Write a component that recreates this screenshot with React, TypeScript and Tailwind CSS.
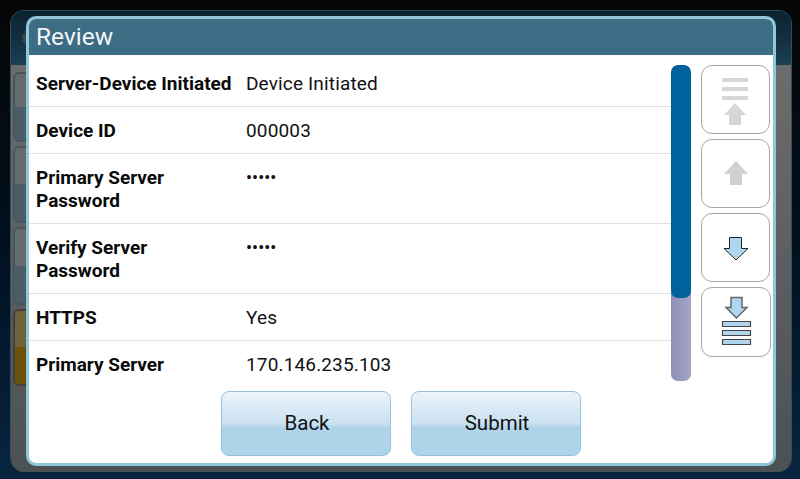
const rows = [
  { label: 'Server-Device Initiated', value: 'Device Initiated', h: 'h-[52px]', pt: 'pt-[17px]', valueSize: 'text-[19px] tracking-[0.15px]', labelWidth: 'whitespace-nowrap' },
  { label: 'Device ID', value: '000003', h: 'h-[47px]', pt: 'pt-[12px]', valueSize: 'text-[19px] tracking-[0.15px]', labelWidth: 'whitespace-nowrap' },
  { label: 'Primary Server Password', value: '•••••', h: 'h-[70px]', pt: 'pt-[12px]', valueSize: 'text-[18px]', labelWidth: 'w-[150px]' },
  { label: 'Verify Server Password', value: '•••••', h: 'h-[70px]', pt: 'pt-[12px]', valueSize: 'text-[18px]', labelWidth: 'w-[150px]' },
  { label: 'HTTPS', value: 'Yes', h: 'h-[47px]', pt: 'pt-[12px]', valueSize: 'text-[19px] tracking-[0.15px]', labelWidth: 'whitespace-nowrap' },
  { label: 'Primary Server', value: '170.146.235.103', h: 'h-[47px]', pt: 'pt-[12px]', valueSize: 'text-[19px] tracking-[0.15px]', labelWidth: 'whitespace-nowrap' },
];

const ScrollButton = ({ children, className }: { children: React.ReactNode; className: string }) => (
  <div className={`rounded-[11px] border border-[#a8a8a8] bg-white ${className}`}>
    <svg width="68" height="68" viewBox="0 0 68 68">
      {children}
    </svg>
  </div>
);

const ActionButton = ({ label }: { label: string }) => (
  <button className="w-[170px] h-[65px] pl-[3px] rounded-[8px] border border-[#93c0da] bg-gradient-to-b from-[#edf4fb] via-[#c9e0f0] via-[51%] to-[#afd4ea] to-[56%] text-[20.5px] text-[#111]">
    {label}
  </button>
);

const Tile = ({ className }: { className: string }) => (
  <div className={`w-[30px] rounded-[6px] border-2 border-[#46565f] bg-gradient-to-b from-[#666a6c] from-50% to-[#4b5d68] to-50% ${className}`} />
);

export default function App() {
  return (
    <div className="relative w-[800px] h-[479px] overflow-hidden bg-gradient-to-b from-[#060606] via-[#00101e] to-[#0a2540] font-['Roboto',sans-serif]">
      {/* Screen behind the dialog */}
      <div className="ml-[10px] pt-[10px] w-[782px]">
        <div className="h-[462px] rounded-[14px] border-t border-x border-[#2f4d5e] overflow-hidden">
          <div className="h-[54px] bg-gradient-to-b from-[#0a2230] to-[#1c3f54] pl-[11px] pt-[18px]">
            <svg width="18" height="18" viewBox="0 0 18 18">
              <circle cx="9" cy="9" r="6" fill="none" stroke="#3b4a52" strokeWidth="4" />
              <circle cx="9" cy="9" r="8.5" fill="none" stroke="#3b4a52" strokeWidth="1.5" strokeDasharray="3 2.5" />
            </svg>
          </div>
          <div className="h-[408px] bg-gradient-to-b from-[#6c6c6c] to-[#4b5154] pl-[2px] pt-[7px]">
            <div className="flex flex-col gap-[4px]">
              <Tile className="h-[70px]" />
              <Tile className="h-[77px]" />
              <Tile className="h-[78px]" />
              <div className="w-[30px] h-[77px] rounded-[6px] border-2 border-[#474038] bg-gradient-to-b from-[#6f6238] from-50% to-[#6b5208] to-50%" />
            </div>
          </div>
        </div>
      </div>

      {/* Dialog */}
      <div className="absolute left-[26px] top-[16px] w-[750px] h-[450px] rounded-[10px] border-[3px] border-[#8fc7d9] bg-white overflow-hidden flex flex-col">
        <div className="h-[36px] shrink-0 bg-[#3c6d85] pl-[7px] text-[24.5px] leading-[36px] text-[#f2f6f8]">Review</div>
        <div className="flex">
          <div className="w-[642px] h-[325px] overflow-hidden">
            {rows.map((r) => (
              <div key={r.label} className={`flex border-b border-[#e0e0e0] px-[7px] ${r.h}`}>
                <div className="w-[210px] shrink-0">
                  <div className={`${r.labelWidth} ${r.pt} text-[19px] leading-[23px] font-bold text-[#0a0a0a]`}>
                    {r.label}
                  </div>
                </div>
                <div className={`${r.pt} ${r.valueSize} leading-[23px] text-[#111]`}>{r.value}</div>
              </div>
            ))}
          </div>
          <div className="mt-[10px] w-[20px] h-[316px] rounded-[7px] bg-gradient-to-r from-[#8f8fb3] to-[#a3a6c6] overflow-hidden">
            <div className="h-[233px] rounded-[7px] bg-[#00629c]" />
          </div>
          <div className="ml-[10px] mt-[10px] flex flex-col">
            <ScrollButton className="w-[69px] h-[69px]">
              <path d="M20 12h26v4H20zM20 21h26v4H20zM20 30h26v4H20z" fill="#d3d7da" />
              <path d="M33 37 L44 49 L39 49 L39 59 L27 59 L27 49 L22 49 Z" fill="#d3d7da" />
            </ScrollButton>
            <ScrollButton className="w-[69px] h-[69px] mt-[5px]">
              <path d="M34 21 L46 34 L40 34 L40 45 L28 45 L28 34 L22 34 Z" fill="#cdd1d4" />
            </ScrollButton>
            <ScrollButton className="w-[69px] h-[69px] mt-[5px]">
              <path d="M27.5 23.5 L39.5 23.5 L39.5 34.5 L46 34.5 L34 46 L22 34.5 L27.5 34.5 Z" fill="#b0d5ee" stroke="#222" strokeWidth="1" />
            </ScrollButton>
            <ScrollButton className="w-[70px] h-[70px] mt-[5px]">
              <path d="M29 9.5 L40 9.5 L40 19.5 L45 19.5 L34.5 30 L24 19.5 L29 19.5 Z" fill="#b0d5ee" stroke="#666" strokeWidth="1.5" />
              <path d="M20.5 33.5h28v5h-28zM20.5 42.5h28v5h-28zM20.5 51.5h28v5h-28z" fill="#b0d5ee" stroke="#444" strokeWidth="1.2" />
            </ScrollButton>
          </div>
        </div>
        <div className="flex justify-center gap-[20px] mt-[10px] pr-[1px]">
          <ActionButton label="Back" />
          <ActionButton label="Submit" />
        </div>
      </div>
    </div>
  );
}
